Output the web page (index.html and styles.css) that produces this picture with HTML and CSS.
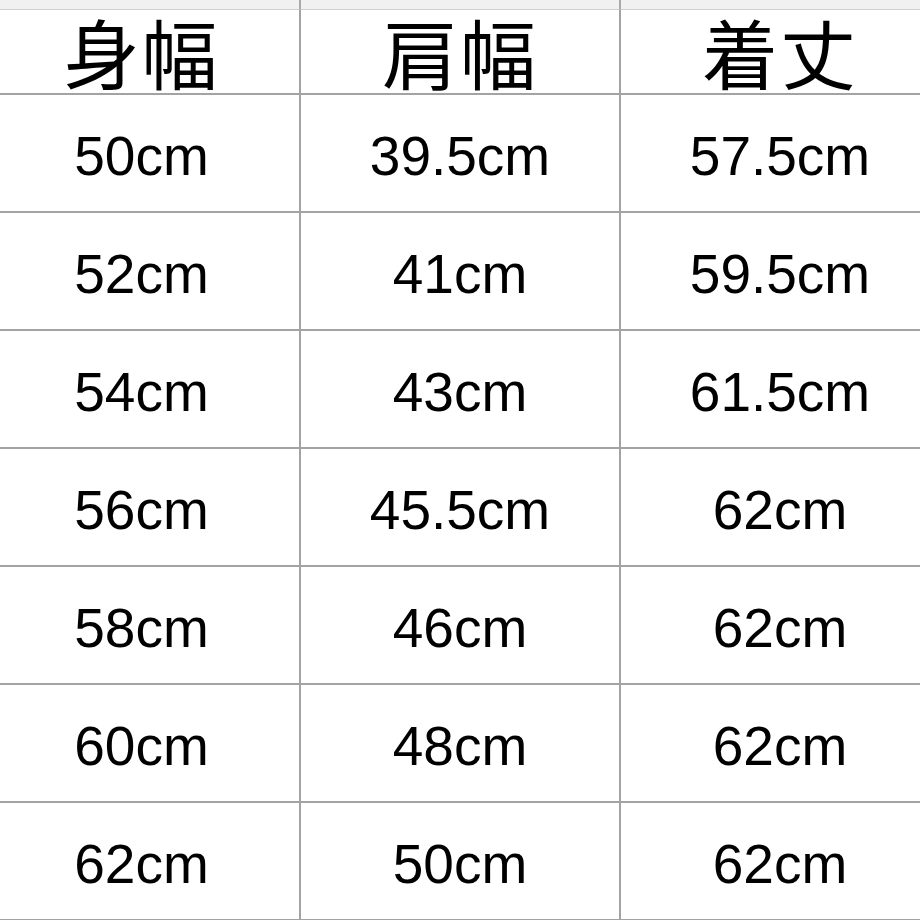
FILE: index.html
```html
<!DOCTYPE html>
<html lang="ja">
<head>
<meta charset="utf-8">
<title>サイズ表</title>
<link rel="stylesheet" href="styles.css">
</head>
<body>
<div class="sheet">
  <div class="strip"></div><div class="strip"></div><div class="strip"></div>
  <div class="cell head">身幅</div><div class="cell head">肩幅</div><div class="cell head">着丈</div>
  <div class="cell">50cm</div><div class="cell">39.5cm</div><div class="cell">57.5cm</div>
  <div class="cell">52cm</div><div class="cell">41cm</div><div class="cell">59.5cm</div>
  <div class="cell">54cm</div><div class="cell">43cm</div><div class="cell">61.5cm</div>
  <div class="cell">56cm</div><div class="cell">45.5cm</div><div class="cell">62cm</div>
  <div class="cell">58cm</div><div class="cell">46cm</div><div class="cell">62cm</div>
  <div class="cell">60cm</div><div class="cell">48cm</div><div class="cell">62cm</div>
  <div class="cell">62cm</div><div class="cell">50cm</div><div class="cell">62cm</div>
</div>
</body>
</html>
```
FILE: styles.css
```css
html, body {
  margin: 0;
  padding: 0;
  background: #ffffff;
  overflow: hidden;
}
.sheet {
  display: grid;
  grid-template-columns: 317px 320px 320px;
  grid-template-rows: 10px 85px repeat(7, 118px);
  margin-left: -16px;
  width: 957px;
  font-family: "Liberation Sans", Arial, "Noto Sans CJK JP", sans-serif;
  color: #000000;
}
.strip {
  background: #f1f1f1;
  border-right: 2px solid #a9a9a9;
  border-bottom: 1px solid #cfcfcf;
}
.cell {
  display: flex;
  align-items: center;
  justify-content: center;
  border-right: 2px solid #a3a3a3;
  border-bottom: 2px solid #a3a3a3;
  font-size: 55px;
  line-height: 1;
  padding-top: 6px;
  box-sizing: border-box;
}
.head {
  font-family: "Noto Sans CJK JP", sans-serif;
  font-size: 76px;
  font-weight: 400;
  line-height: 1;
  padding-top: 0;
  padding-bottom: 2px;
  letter-spacing: 2px;
}
```
